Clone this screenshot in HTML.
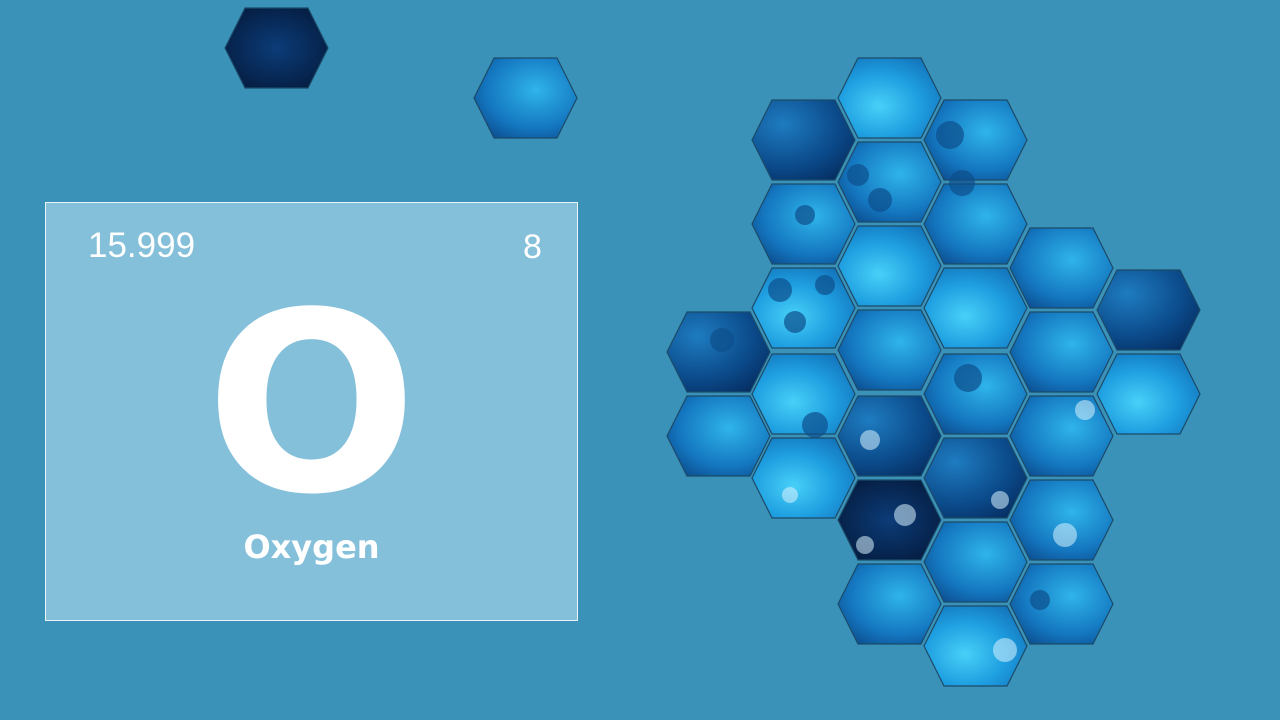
<!DOCTYPE html>
<html><head><meta charset="utf-8"><style>
html,body{margin:0;padding:0;width:1280px;height:720px;overflow:hidden;background:#3b92b8;font-family:"Liberation Sans",sans-serif}
.card{position:absolute;left:45px;top:202px;width:531px;height:417px;background:#85c0da;border:1px solid #e8f4fa}
.t{position:absolute;color:#fff}
.dj{font-family:"DejaVu Sans",sans-serif;font-weight:bold;line-height:1;text-align:center}
</style></head><body>
<svg width="1280" height="720" style="position:absolute;left:0;top:0">
<defs>
<radialGradient id="a" cx="0.6" cy="0.4" r="0.8"><stop offset="0" stop-color="#2fb4ea"/><stop offset="0.6" stop-color="#1477c0"/><stop offset="1" stop-color="#0a4282"/></radialGradient>
<radialGradient id="b" cx="0.3" cy="0.3" r="0.9"><stop offset="0" stop-color="#1e7cc0"/><stop offset="0.6" stop-color="#0b4a8a"/><stop offset="1" stop-color="#052a5c"/></radialGradient>
<radialGradient id="c" cx="0.4" cy="0.6" r="0.8"><stop offset="0" stop-color="#48d0f8"/><stop offset="0.5" stop-color="#1e9ee0"/><stop offset="1" stop-color="#1068b0"/></radialGradient>
<radialGradient id="d" cx="0.5" cy="0.5" r="0.8"><stop offset="0" stop-color="#0c3c78"/><stop offset="1" stop-color="#02122e"/></radialGradient>
<polygon id="h" points="0,40 20,0 83,0 103,40 83,80 20,80"/>
</defs>
<g stroke="#1b4b68" stroke-width="1.2">
<use href="#h" x="225" y="8" fill="url(#d)"/>
<use href="#h" x="474" y="58" fill="url(#a)"/>
<use href="#h" x="838" y="58" fill="url(#c)"/>
<use href="#h" x="838" y="142" fill="url(#a)"/>
<use href="#h" x="838" y="226" fill="url(#c)"/>
<use href="#h" x="838" y="310" fill="url(#a)"/>
<use href="#h" x="838" y="396" fill="url(#b)"/>
<use href="#h" x="838" y="480" fill="url(#d)"/>
<use href="#h" x="838" y="564" fill="url(#a)"/>
<use href="#h" x="752" y="100" fill="url(#b)"/>
<use href="#h" x="752" y="184" fill="url(#a)"/>
<use href="#h" x="752" y="268" fill="url(#c)"/>
<use href="#h" x="752" y="354" fill="url(#c)"/>
<use href="#h" x="752" y="438" fill="url(#c)"/>
<use href="#h" x="924" y="100" fill="url(#a)"/>
<use href="#h" x="924" y="184" fill="url(#a)"/>
<use href="#h" x="924" y="268" fill="url(#c)"/>
<use href="#h" x="924" y="354" fill="url(#a)"/>
<use href="#h" x="924" y="438" fill="url(#b)"/>
<use href="#h" x="924" y="522" fill="url(#a)"/>
<use href="#h" x="924" y="606" fill="url(#c)"/>
<use href="#h" x="667" y="312" fill="url(#b)"/>
<use href="#h" x="667" y="396" fill="url(#a)"/>
<use href="#h" x="1010" y="228" fill="url(#a)"/>
<use href="#h" x="1010" y="312" fill="url(#a)"/>
<use href="#h" x="1010" y="396" fill="url(#a)"/>
<use href="#h" x="1010" y="480" fill="url(#a)"/>
<use href="#h" x="1010" y="564" fill="url(#a)"/>
<use href="#h" x="1097" y="270" fill="url(#b)"/>
<use href="#h" x="1097" y="354" fill="url(#c)"/>
</g>
<g fill="#0d4f8c" opacity="0.7">
<circle cx="950" cy="135" r="14"/><circle cx="858" cy="175" r="11"/><circle cx="880" cy="200" r="12"/><circle cx="805" cy="215" r="10"/>
<circle cx="962" cy="183" r="13"/><circle cx="780" cy="290" r="12"/><circle cx="825" cy="285" r="10"/><circle cx="795" cy="322" r="11"/>
<circle cx="722" cy="340" r="12"/><circle cx="968" cy="378" r="14"/><circle cx="815" cy="425" r="13"/><circle cx="1040" cy="600" r="10"/>
</g>
<g fill="#d8f2ff" opacity="0.55">
<circle cx="870" cy="440" r="10"/><circle cx="905" cy="515" r="11"/><circle cx="1000" cy="500" r="9"/><circle cx="1065" cy="535" r="12"/>
<circle cx="865" cy="545" r="9"/><circle cx="1005" cy="650" r="12"/><circle cx="1085" cy="410" r="10"/><circle cx="790" cy="495" r="8"/>
</g>
</svg>
<div class="card"></div>
<div class="t" style="left:88px;top:226px;font-size:35px">15.999</div>
<div class="t" style="left:523px;top:228px;font-size:34px">8</div>
<div class="t dj" style="left:45px;width:533px;top:280px;font-size:249px">O</div>
<div class="t dj" style="left:45px;width:533px;top:531px;font-size:32px">Oxygen</div>
</body></html>
